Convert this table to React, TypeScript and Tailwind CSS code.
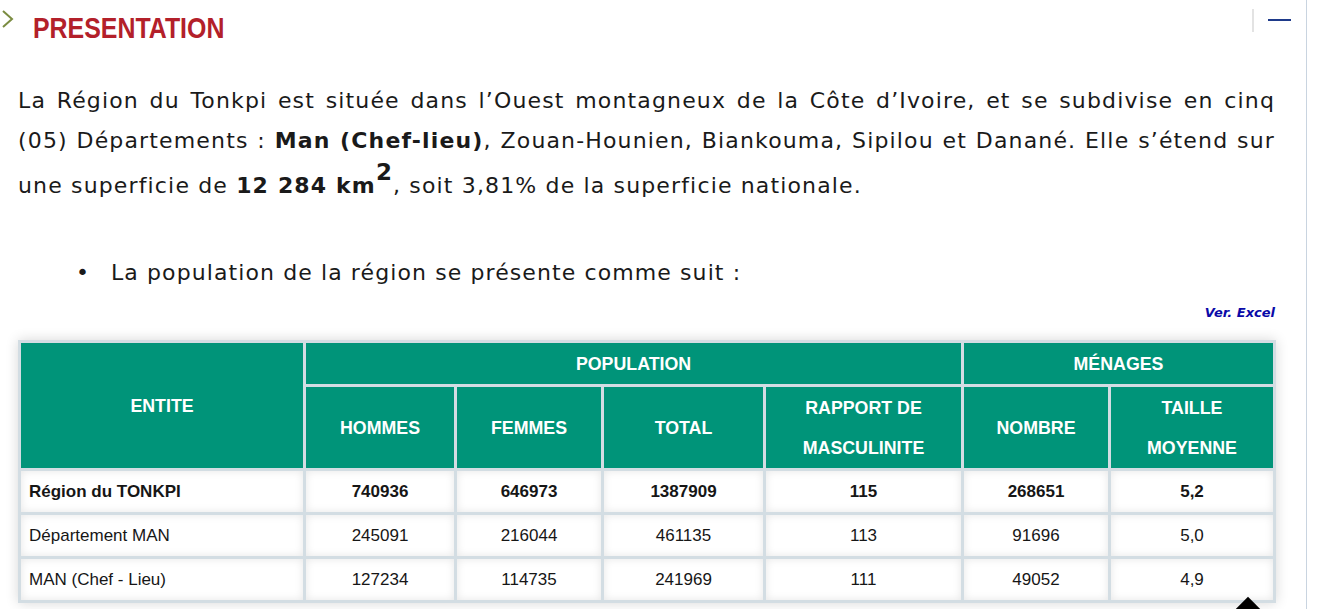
import React from "react";

const headGreen = "bg-[#009479]";

function HeadCell({ children, className = "" }: { children: React.ReactNode; className?: string }) {
  return (
    <div
      className={`${headGreen} flex flex-col items-center justify-center text-center text-white font-bold text-[17.8px] leading-[40px] font-['Liberation_Sans',Arial,sans-serif] ${className}`}
    >
      {children}
    </div>
  );
}

function DataCell({ children, bold, left }: { children: React.ReactNode; bold?: boolean; left?: boolean }) {
  return (
    <div
      className={`bg-white shadow-[inset_0_0_8px_rgba(0,0,0,0.10)] flex items-center text-[17px] text-[#161616] font-['Liberation_Sans',Arial,sans-serif] ${
        bold ? "font-bold" : ""
      } ${left ? "justify-start pl-[8px]" : "justify-center"}`}
    >
      {children}
    </div>
  );
}

const rows = [
  { name: "Région du TONKPI", vals: ["740936", "646973", "1387909", "115", "268651", "5,2"], bold: true },
  { name: "Département MAN", vals: ["245091", "216044", "461135", "113", "91696", "5,0"], bold: false },
  { name: "MAN (Chef - Lieu)", vals: ["127234", "114735", "241969", "111", "49052", "4,9"], bold: false },
];

export default function App() {
  return (
    <div className="relative h-[609px] w-[1321px] overflow-hidden bg-white">
      <div className="h-full w-[1307px] border-r border-[#c9d4e0]">
        {/* Title bar */}
        <div className="flex h-[81px] items-start justify-between">
          <div className="flex items-start">
            <svg width="16" height="22" viewBox="0 0 16 22" className="mt-[8px]">
              <polyline points="3,3 12,11 3,19" fill="none" stroke="#7b8c41" strokeWidth="2" />
            </svg>
            <div className="ml-[17px] pt-[13px]">
              <span className="inline-block origin-left scale-x-[0.83] text-[30px] leading-none font-bold text-[#b3202a] font-['Liberation_Sans',Arial,sans-serif]">
                PRESENTATION
              </span>
            </div>
          </div>
          <div className="flex items-start pr-[15px]">
            <div className="mt-[9px] h-[23px] w-[2px] bg-[#e3e3e3]" />
            <div className="mt-[19px] ml-[14px] h-[2px] w-[23px] bg-[#1e3a8a]" />
          </div>
        </div>

        {/* Paragraph */}
        <div className="pl-[18px] pr-[31px] text-[22px] leading-[40px] tracking-[1.15px] text-[#1a1a1a] font-['DejaVu_Sans',Verdana,sans-serif]">
          <div className="text-justify [text-align-last:justify]">
            La Région du Tonkpi est située dans l’Ouest montagneux de la Côte d’Ivoire, et se subdivise en cinq
          </div>
          <div className="text-justify [text-align-last:justify]">
            (05) Départements : <b>Man (Chef-lieu)</b>, Zouan-Hounien, Biankouma, Sipilou et Danané. Elle s’étend sur
          </div>
          <div>
            une superficie de <b>12 284 km</b>
            <span className="font-bold text-[23px] leading-none align-[13px]">2</span>, soit 3,81% de la superficie nationale.
          </div>
        </div>

        {/* Bullet */}
        <div className="mt-[47px] ml-[76px] flex text-[22px] leading-[40px] tracking-[1.1px] text-[#1a1a1a] font-['DejaVu_Sans',Verdana,sans-serif]">
          <span className="w-[35px]">•</span>
          <span>La population de la région se présente comme suit :</span>
        </div>

        {/* Ver. Excel */}
        <div className="mt-[12px] pr-[31px] text-right text-[13px] leading-[16px] font-bold italic text-[#0a0aa8] font-['DejaVu_Sans',Verdana,sans-serif]">
          Ver. Excel
        </div>

        {/* Table */}
        <div className="mt-[19px] ml-[18px] inline-grid grid-cols-[282px_148px_144px_159px_195px_144px_162px] grid-rows-[41px_81px_41px_41px_41px] gap-[3px] bg-[#d3dde3] p-[3px] shadow-[0_0_12px_rgba(0,0,0,0.16)]">
          <HeadCell className="row-span-2">ENTITE</HeadCell>
          <HeadCell className="col-span-4">POPULATION</HeadCell>
          <HeadCell className="col-span-2">MÉNAGES</HeadCell>
          <HeadCell>HOMMES</HeadCell>
          <HeadCell>FEMMES</HeadCell>
          <HeadCell>TOTAL</HeadCell>
          <HeadCell>
            <span>RAPPORT DE</span>
            <span>MASCULINITE</span>
          </HeadCell>
          <HeadCell>NOMBRE</HeadCell>
          <HeadCell>
            <span>TAILLE</span>
            <span>MOYENNE</span>
          </HeadCell>
          {rows.map((r) => (
            <React.Fragment key={r.name}>
              <DataCell bold={r.bold} left>
                {r.name}
              </DataCell>
              {r.vals.map((v, i) => (
                <DataCell key={i} bold={r.bold}>
                  {v}
                </DataCell>
              ))}
            </React.Fragment>
          ))}
        </div>
      </div>

      {/* back-to-top diamond */}
      <div className="absolute left-[1233px] top-[603px] h-[30px] w-[30px] rotate-45 bg-black" />
    </div>
  );
}
